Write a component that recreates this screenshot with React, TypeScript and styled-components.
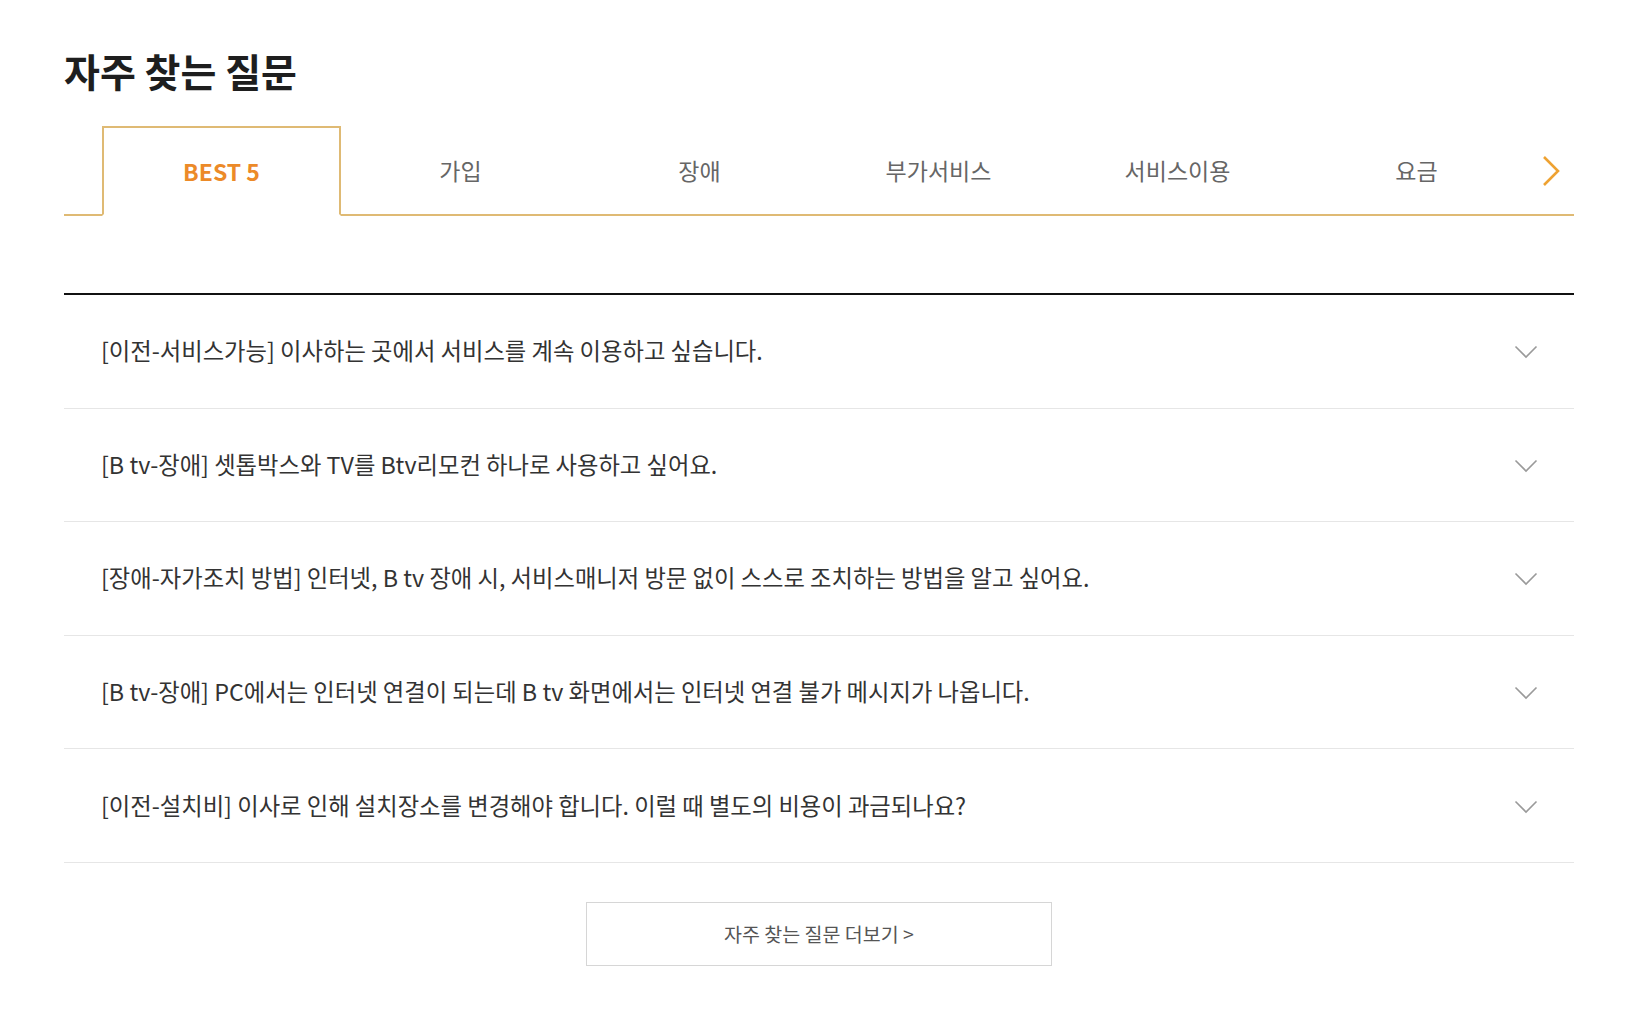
import React from "react";
import styled, { createGlobalStyle } from "styled-components";

const GlobalStyle = createGlobalStyle`
  html, body { margin: 0; padding: 0; background: #fff; }
  body { font-family: "Noto Sans CJK KR", "Noto Sans", sans-serif; }
  * { box-sizing: border-box; }
`;

const Page = styled.div`
  padding: 40px 55px 40px 64px;
`;

const Title = styled.h2`
  margin: 0;
  font-size: 39px;
  font-weight: 700;
  line-height: 60px;
  color: #1e1e1e;
`;

const TabBar = styled.div`
  margin-top: 26px;
  position: relative;
  display: flex;
  align-items: flex-end;
  height: 90px;
  padding-left: 38px;
  border-bottom: 2px solid #dfba74;
`;

const Tab = styled.button<{ $active?: boolean }>`
  width: 239px;
  height: ${(p) => (p.$active ? "90px" : "88px")};
  margin-bottom: ${(p) => (p.$active ? "-2px" : "0")};
  background: ${(p) => (p.$active ? "#fff" : "transparent")};
  font-family: inherit;
  font-size: 23px;
  cursor: pointer;
  padding: 0;
  color: ${(p) => (p.$active ? "#ec8a28" : "#666")};
  font-weight: ${(p) => (p.$active ? 600 : 400)};
  border: ${(p) => (p.$active ? "2px solid #dfba74" : "0")};
  border-bottom: ${(p) => (p.$active ? "2px solid #fff" : "0")};
`;

const NextArrow = styled.button`
  position: absolute;
  right: 11px;
  top: 28px;
  width: 24px;
  height: 34px;
  padding: 0;
  border: 0;
  background: transparent;
  display: flex;
  align-items: center;
  justify-content: center;
  cursor: pointer;
`;

const List = styled.ul`
  list-style: none;
  margin: 77px 0 0;
  padding: 0;
  border-top: 2px solid #111;
`;

const Row = styled.li`
  display: flex;
  align-items: center;
  justify-content: space-between;
  height: 113.6px;
  padding: 0 36px 2px 37px;
  border-bottom: 1px solid #e6e6e6;
`;

const Question = styled.span`
  font-size: 23.3px;
  color: #333;
`;

const ChevronIcon = styled.svg`
  margin-top: 4px;
  flex-shrink: 0;
`;

const MoreWrap = styled.div`
  display: flex;
  justify-content: center;
  margin-top: 39px;
`;

const MoreButton = styled.button`
  width: 466px;
  height: 64px;
  background: #fff;
  border: 1px solid #d6d6d6;
  font-family: inherit;
  font-size: 19.5px;
  color: #555;
  cursor: pointer;
`;

const Chevron = () => (
  <ChevronIcon width="24" height="14" viewBox="0 0 24 14" fill="none">
    <polyline points="1.5,1.5 12,12 22.5,1.5" stroke="#9a9a9a" strokeWidth="1.6" />
  </ChevronIcon>
);

const tabs = ["BEST 5", "가입", "장애", "부가서비스", "서비스이용", "요금"];
const questions = [
  "[이전-서비스가능] 이사하는 곳에서 서비스를 계속 이용하고 싶습니다.",
  "[B tv-장애] 셋톱박스와 TV를 Btv리모컨 하나로 사용하고 싶어요.",
  "[장애-자가조치 방법] 인터넷, B tv 장애 시, 서비스매니저 방문 없이 스스로 조치하는 방법을 알고 싶어요.",
  "[B tv-장애] PC에서는 인터넷 연결이 되는데 B tv 화면에서는 인터넷 연결 불가 메시지가 나옵니다.",
  "[이전-설치비] 이사로 인해 설치장소를 변경해야 합니다. 이럴 때 별도의 비용이 과금되나요?",
];

export default function App() {
  return (
    <Page>
      <GlobalStyle />
      <Title>자주 찾는 질문</Title>
      <TabBar>
        {tabs.map((t, i) => (
          <Tab key={t} $active={i === 0}>
            {t}
          </Tab>
        ))}
        <NextArrow aria-label="다음">
          <svg width="20" height="32" viewBox="0 0 20 32" fill="none">
            <polyline points="3,2 17,16 3,30" stroke="#eea232" strokeWidth="2.6" />
          </svg>
        </NextArrow>
      </TabBar>
      <List>
        {questions.map((q) => (
          <Row key={q}>
            <Question>{q}</Question>
            <Chevron />
          </Row>
        ))}
      </List>
      <MoreWrap>
        <MoreButton>자주 찾는 질문 더보기 &gt;</MoreButton>
      </MoreWrap>
    </Page>
  );
}
